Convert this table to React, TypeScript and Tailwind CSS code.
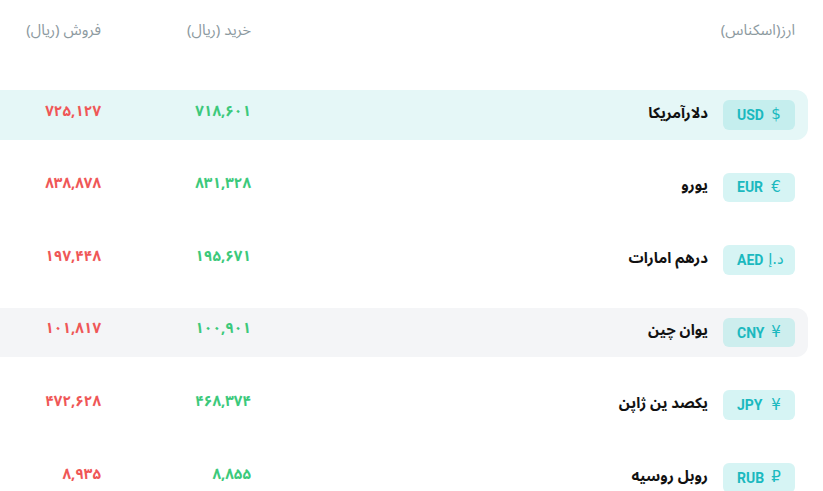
import React from "react";

type Row = { sym: string; code: string; name: string; buy: string; sell: string; bg: string; badge: string };

const rows: Row[] = [
  { sym: "$", code: "USD", name: "دلارآمریکا", buy: "۷۱۸,۶۰۱", sell: "۷۲۵,۱۲۷", bg: "bg-[#e5f7f7]", badge: "bg-[#c5eeee]" },
  { sym: "€", code: "EUR", name: "یورو", buy: "۸۳۱,۳۲۸", sell: "۸۳۸,۸۷۸", bg: "", badge: "bg-[#d6f4f4]" },
  { sym: "د.إ", code: "AED", name: "درهم امارات", buy: "۱۹۵,۶۷۱", sell: "۱۹۷,۴۴۸", bg: "", badge: "bg-[#d6f4f4]" },
  { sym: "¥", code: "CNY", name: "یوان چین", buy: "۱۰۰,۹۰۱", sell: "۱۰۱,۸۱۷", bg: "bg-[#f4f5f7]", badge: "bg-[#cdeeee]" },
  { sym: "¥", code: "JPY", name: "یکصد ین ژاپن", buy: "۴۶۸,۳۷۴", sell: "۴۷۲,۶۲۸", bg: "", badge: "bg-[#d6f4f4]" },
  { sym: "₽", code: "RUB", name: "روبل روسیه", buy: "۸,۸۵۵", sell: "۸,۹۳۵", bg: "", badge: "bg-[#d6f4f4]" },
];

const fa = { fontFamily: '"Noto Sans Arabic", "Vazirmatn", "DejaVu Sans", sans-serif' };

export default function App() {
  return (
    <div className="w-[823px] h-[491px] overflow-hidden bg-white" dir="ltr">
      <div className="w-[808px]" dir="rtl" style={fa}>
        <div className="flex items-center h-[60px] pr-[13px] text-[15px] text-[#8d9a9f]">
          <div className="w-[544px] pt-[1px]">ارز(اسکناس)</div>
          <div className="w-[150px]">خرید (ریال)</div>
          <div className="w-[101px]">فروش (ریال)</div>
        </div>
        <div className="flex flex-col gap-[23px] mt-[30px]">
          {rows.map((r) => (
            <div key={r.code} className={`flex items-center h-[49.6px] pr-[13px] rounded-r-[12px] ${r.bg}`}>
              <div className="w-[544px] flex items-center gap-[15px]">
                <div className={`w-[72px] h-[29.6px] rounded-[6px] flex items-center justify-between pl-[14px] pr-[9px] text-[#1bb9bf] ${r.badge}`}>
                  <span className="w-[20px] text-center text-[15px] leading-none" style={{ fontFamily: '"DejaVu Sans", sans-serif' }}>{r.sym}</span>
                  <span className="text-[14px] font-bold leading-none" style={{ fontFamily: "Roboto, sans-serif" }}>{r.code}</span>
                </div>
                <div className="text-[15px] font-bold text-[#111] pb-[4px]">{r.name}</div>
              </div>
              <div className="w-[150px] text-[15px] font-bold text-[#3cc97b] pb-[8px]">{r.buy}</div>
              <div className="w-[101px] text-[15px] font-bold text-[#ef5757] pb-[8px]">{r.sell}</div>
            </div>
          ))}
        </div>
      </div>
    </div>
  );
}
